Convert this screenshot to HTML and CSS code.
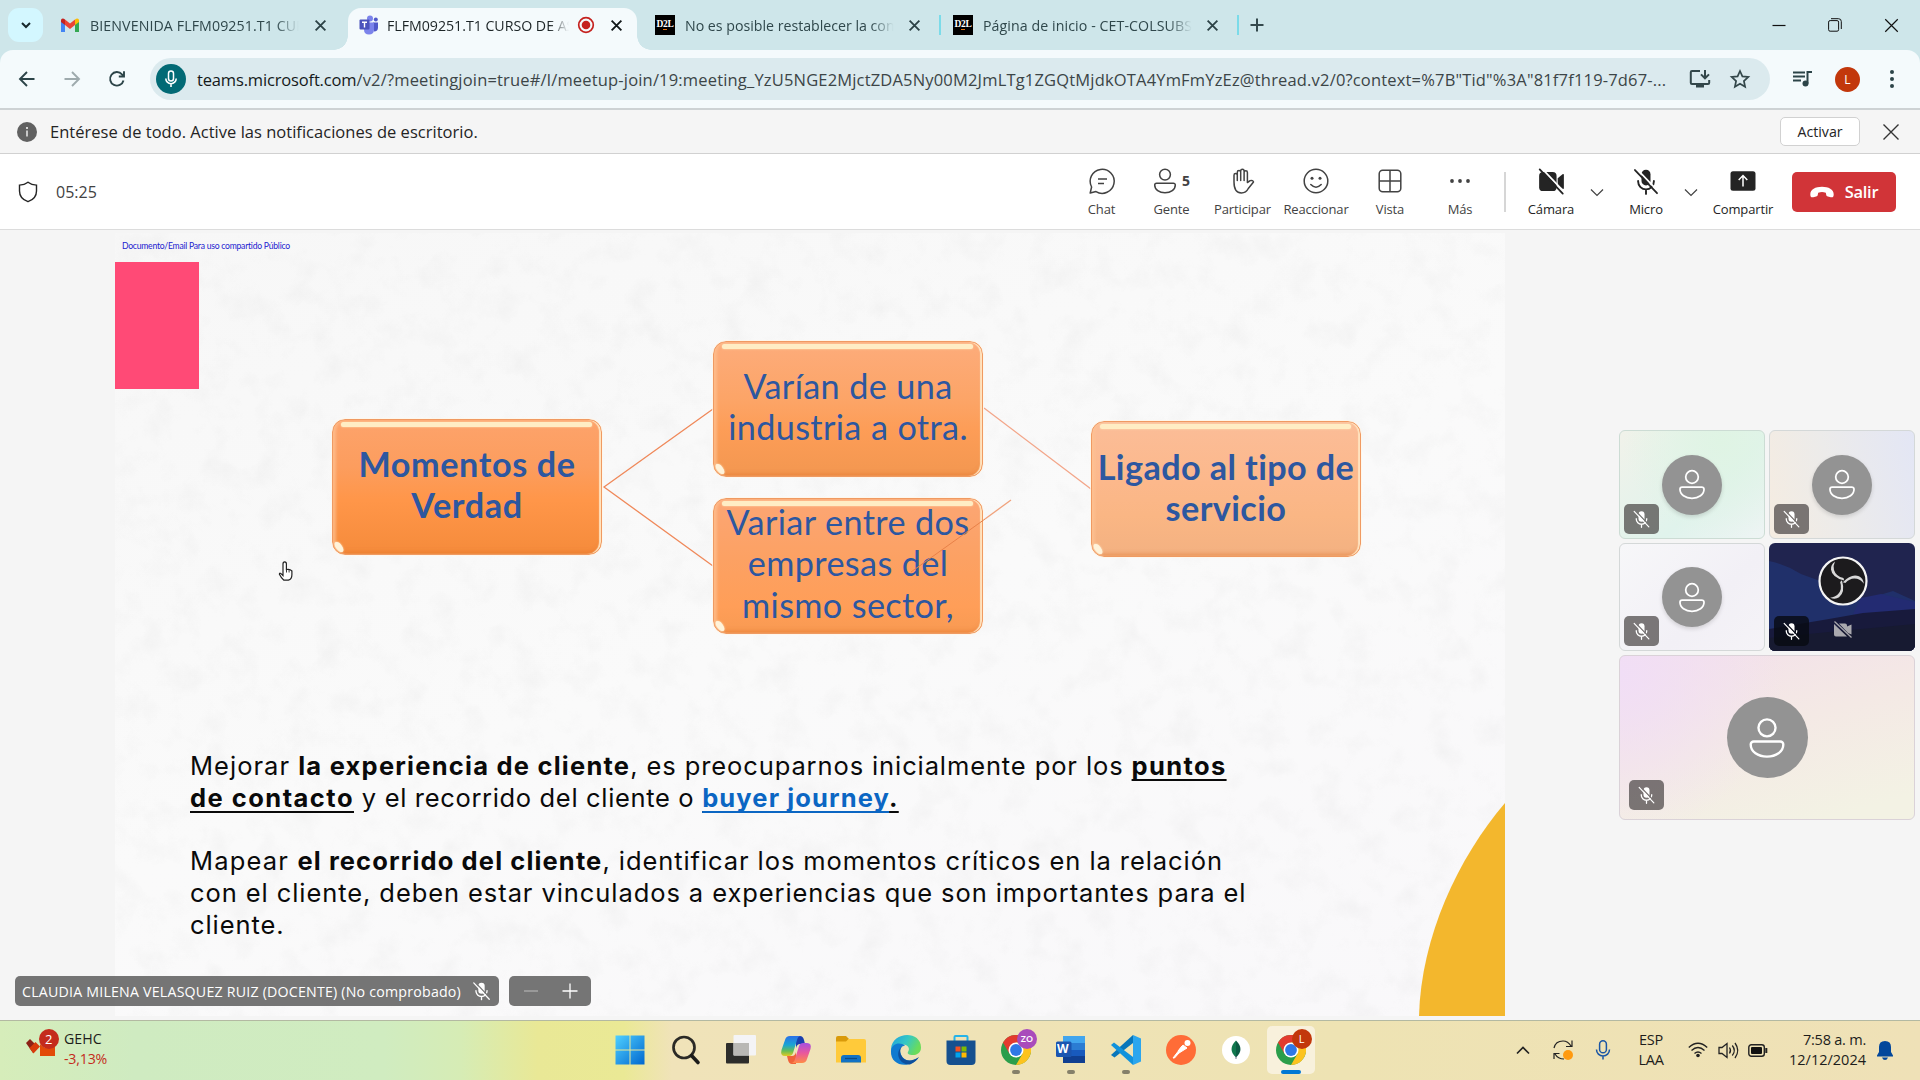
FILE: index.html
```html
<!DOCTYPE html>
<html lang="es">
<head>
<meta charset="utf-8">
<title>FLFM09251.T1 CURSO DE A</title>
<link rel="stylesheet" href="styles.css">
</head>
<body>
<svg class="defs" width="0" height="0">
  <defs>
    <mask id="slash-gap" maskUnits="userSpaceOnUse" x="0" y="0" width="24" height="24">
      <rect width="24" height="24" fill="#fff"/>
      <path d="M3.4 .4 23 21" stroke="#000" stroke-width="1.6"/>
    </mask>
    <symbol id="mic-off" viewBox="0 0 24 24">
      <g mask="url(#slash-gap)">
        <rect x="8" y="1.5" width="8" height="14" rx="4" fill="currentColor"/>
        <path d="M5 11.5v.5a7 7 0 0 0 14 0v-.5M12 19v4" fill="none" stroke="currentColor" stroke-width="1.7" stroke-linecap="round"/>
      </g>
      <path d="M2.2 1.8 21.8 22.4" stroke="currentColor" stroke-width="1.6" stroke-linecap="round"/>
    </symbol>
    <symbol id="cam-off" viewBox="0 0 24 24">
      <g mask="url(#slash-gap)" fill="currentColor">
        <rect x="1" y="3.5" width="15.5" height="17" rx="3.5"/>
        <path d="m17.5 9 4.3-3.4q1.2-.7 1.2.6v11.6q0 1.3-1.2.6L17.500 15z"/>
      </g>
      <path d="M1.500 1.200 22 22.800" stroke="currentColor" stroke-width="1.6" stroke-linecap="round"/>
    </symbol>
    <symbol id="person" viewBox="0 0 24 26">
      <g fill="none" stroke="currentColor" stroke-width="1.5">
        <circle cx="12" cy="6.600" r="5.400"/>
        <path d="M3.600 15.200h16.800a1.900 1.900 0 0 1 1.900 1.900c0 4.600-4.600 7.700-10.300 7.700S1.700 21.700 1.700 17.100a1.900 1.900 0 0 1 1.900-1.900z"/>
      </g>
    </symbol>
    <symbol id="close" viewBox="0 0 12 12"><path d="m1.500 1.500 9 9m0-9-9 9" stroke="currentColor" stroke-width="1.700"/></symbol>
    <symbol id="close-thin" viewBox="0 0 18 18"><path d="m1.500 1.500 15 15m0-15-15 15" stroke="currentColor" stroke-width="1.400"/></symbol>
    <symbol id="chrome" viewBox="0 0 30 30">
      <circle cx="15" cy="15" r="15" fill="#2b9e4b"/>
      <path d="M2 7.500A15 15 0 0 1 28 7.500H15l-6.500 11.200z" fill="#e33b2e"/>
      <path d="M28 7.500A15 15 0 0 1 15 30l6.500-11.300L15 7.500z" fill="#fcc31e"/>
      <circle cx="15" cy="15" r="7.500" fill="#fff"/><circle cx="15" cy="15" r="5.900" fill="#2f78e6"/>
    </symbol>
  </defs>
</svg>

<header class="tabs">
  <button class="tab-menu"><svg width="12" height="12" viewBox="0 0 12 12"><path d="m2 4 4 4 4-4" fill="none" stroke="#16282b" stroke-width="2"/></svg></button>
  <div class="tab t-mail">
    <svg class="fav" width="20" height="20" viewBox="0 0 20 20"><path d="M1 17V5l4 3v9z" fill="#4285f4"/><path d="M15 17V8l4-3v12z" fill="#34a853"/><path d="M5 4.500 10 8.500l5-4V10l-5 4-5-4z" fill="#ea4335"/><path d="M15 10V4.500c2-1.700 4-.9 4 1V7z" fill="#fbbc04"/><path d="M5 10V4.500c-2-1.700-4-.9-4 1V7z" fill="#c5221f"/></svg>
    <span class="tab-title">BIENVENIDA FLFM09251.T1 CUR</span>
    <svg class="x" width="13" height="13"><use href="#close"/></svg>
  </div>
  <div class="tab t-teams active">
    <svg class="fav" width="20" height="20" viewBox="0 0 20 20"><circle cx="11" cy="3.500" r="3" fill="#7b83eb"/><circle cx="16.800" cy="4.500" r="2" fill="#5059c9"/><path d="M14 7.500h5v5q0 4-4 4z" fill="#5059c9"/><path d="M5 7.500h10v7q0 5-5 5t-5-5z" fill="#7b83eb"/><rect x=".5" y="4.500" width="10" height="10" rx="1" fill="#4b53bc"/><path d="M3 7.200h5M5.500 7.200V12.500" stroke="#fff" stroke-width="1.400"/></svg>
    <span class="tab-title">FLFM09251.T1 CURSO DE AS</span>
    <svg class="rec" width="18" height="18" viewBox="0 0 18 18"><circle cx="9" cy="9" r="7.300" fill="none" stroke="#c5221f" stroke-width="1.700"/><circle cx="9" cy="9" r="4.300" fill="#c5221f"/></svg>
    <svg class="x" width="13" height="13"><use href="#close"/></svg>
  </div>
  <div class="tab t-d2l">
    <span class="d2l">D<i>2</i>L</span>
    <span class="tab-title d2">No es posible restablecer la con</span>
    <svg class="x" width="13" height="13"><use href="#close"/></svg>
    <b class="sep"></b>
  </div>
  <div class="tab t-d2l t-home">
    <span class="d2l">D<i>2</i>L</span>
    <span class="tab-title">Página de inicio - CET-COLSUBS</span>
    <svg class="x" width="13" height="13"><use href="#close"/></svg>
    <b class="sep"></b>
  </div>
  <svg class="plus" width="14" height="14" viewBox="0 0 14 14"><path d="M7 .5v13M.5 7h13" stroke="#34494d" stroke-width="2"/></svg>
  <div class="win">
    <svg width="14" height="16" viewBox="0 0 14 16"><path d="M.5 8.500h13" stroke="#111" stroke-width="1.200"/></svg>
    <svg width="14" height="14" viewBox="0 0 14 14"><rect x=".6" y="2.600" width="10" height="10.600" rx="1.500" fill="none" stroke="#111"/><path d="M3 .7h7.500q2.800 0 2.800 2.800V11" fill="none" stroke="#111"/></svg>
    <svg width="15" height="15"><use href="#close-thin"/></svg>
  </div>
</header>

<nav class="toolbar">
  <svg class="nav-ic" width="18" height="18" viewBox="0 0 18 18"><path d="M16.500 9H2.500M9 2 2 9l7 7" fill="none" stroke="#2c4448" stroke-width="1.900"/></svg>
  <svg class="nav-ic" width="18" height="18" viewBox="0 0 18 18"><path d="M1.500 9h14M9 2l7 7-7 7" fill="none" stroke="#9eaaad" stroke-width="1.900"/></svg>
  <svg class="nav-ic" width="18" height="18" viewBox="0 0 18 18"><path d="M15.500 10.500A6.800 6.800 0 1 1 14 4.300l1.800 1.800M16 1.300v5.200h-5.200" fill="none" stroke="#2c4448" stroke-width="1.900"/></svg>
  <div class="omnibox">
    <span class="mic"><svg width="18" height="20" viewBox="0 0 18 20"><rect x="6.500" y="2" width="5" height="10" rx="2.500" fill="none" stroke="#fff" stroke-width="1.500"/><path d="M3.800 9.500a5.200 5.200 0 0 0 10.400 0M9 14.800V18" fill="none" stroke="#fff" stroke-width="1.600"/></svg></span>
    <span class="url"><span class="host">teams.microsoft.com</span><span class="path">/v2/?meetingjoin=true#/l/meetup-join/19:meeting_YzU5NGE2MjctZDA5Ny00M2JmLTg1ZGQtMjdkOTA4YmFmYzEz@thread.v2/0?context=%7B"Tid"%3A"81f7f119-7d67-...</span></span>
    <svg class="install" width="22" height="20" viewBox="0 0 22 20"><path d="M11 2H3q-1.200 0-1.200 1.200v10.600Q1.800 15 3 15h16q1.200 0 1.200-1.200V11M16 1v8m-4-3.600L16 9.300l4-3.900" fill="none" stroke="#33474a" stroke-width="2"/><path d="M7 15h8v3.500H7z" fill="#33474a"/></svg>
    <svg class="star" width="20" height="20" viewBox="0 0 20 20"><path d="m10 2 2.400 5.400 5.900.6-4.400 4 1.200 5.800L10 14.800l-5.100 3 1.200-5.800-4.400-4 5.900-.6z" fill="none" stroke="#33474a" stroke-width="1.700"/></svg>
  </div>
  <svg class="queue" width="20" height="18" viewBox="0 0 20 18"><path d="M0 2.500h12M0 6.500h12M0 10.500h8" stroke="#2c4448" stroke-width="2"/><circle cx="12.500" cy="13.500" r="3" fill="#2c4448"/><path d="M14.500 13.500V2H19" fill="none" stroke="#2c4448" stroke-width="2"/></svg>
  <span class="me">L</span>
  <svg class="dots" width="6" height="20" viewBox="0 0 6 20"><g fill="#2c4448"><circle cx="3" cy="3" r="2"/><circle cx="3" cy="10" r="2"/><circle cx="3" cy="17" r="2"/></g></svg>
</nav>

<section class="notice">
  <svg width="20" height="20" viewBox="0 0 20 20"><circle cx="10" cy="10" r="10" fill="#616161"/><path d="M10 8.500v6" stroke="#fff" stroke-width="1.300"/><circle cx="10" cy="5.900" r="1" fill="#fff"/></svg>
  <span class="notice-text">Entérese de todo. Active las notificaciones de escritorio.</span>
  <button class="activate">Activar</button>
  <svg class="nx" width="18" height="18"><use href="#close-thin"/></svg>
</section>

<section class="meetbar">
  <svg width="20" height="22" viewBox="0 0 20 22"><path d="M10 1.200C7.500 3.200 4.800 4 1.500 4.100V10c0 5.300 3.300 8.900 8.500 10.700 5.200-1.800 8.500-5.400 8.500-10.700V4.100C15.200 4 12.500 3.200 10 1.200z" fill="none" stroke="#242424" stroke-width="1.400"/></svg>
  <span class="clock">05:25</span>
  <div class="actions">
    <div class="act a1"><svg width="26" height="26" viewBox="0 0 26 26" fill="none" stroke="#424242" stroke-width="1.500"><path d="M1.200 25 2.600 19A12 12 0 1 1 7 23.600z" stroke-linejoin="round"/><path d="M9 11h9M9 15.500h6"/></svg><span>Chat</span></div>
    <div class="act a2"><div class="ppl"><svg width="24" height="26"><use href="#person"/></svg><b>5</b></div><span>Gente</span></div>
    <div class="act a3"><svg width="24" height="26" viewBox="0 0 24 26" fill="none" stroke="#424242" stroke-width="1.500" stroke-linejoin="round" stroke-linecap="round"><path d="M3 14V7.200a1.600 1.600 0 0 1 3.300 0V4.300a1.700 1.700 0 0 1 3.400 0V2.900a1.700 1.700 0 0 1 3.400 0V4.500a1.600 1.600 0 0 1 3.300 0V14.500l2.800-1.800c1.600-.8 3 .1 3.300 1.300l-5.200 6.500c-1.500 3-3.300 4.500-6.900 4.500C5.500 25 3 20.500 3 14zM6.300 7v5.500M9.700 4.500v8M13.100 4.500v8"/></svg><span>Participar</span></div>
    <div class="act a4"><svg width="26" height="26" viewBox="0 0 26 26"><circle cx="13" cy="13" r="11.800" fill="none" stroke="#424242" stroke-width="1.500"/><circle cx="9" cy="10.300" r="1.500" fill="#424242"/><circle cx="17" cy="10.300" r="1.500" fill="#424242"/><path d="M7.800 16.500q5.200 5.400 10.400 0" fill="none" stroke="#424242" stroke-width="1.500" stroke-linecap="round"/></svg><span>Reaccionar</span></div>
    <div class="act a5"><svg width="26" height="26" viewBox="0 0 26 26" fill="none" stroke="#424242" stroke-width="1.500"><rect x="2.200" y="2.200" width="21.600" height="21.600" rx="3.500"/><path d="M13 2.200v21.600M2.200 13h21.600"/></svg><span>Vista</span></div>
    <div class="act a6"><svg width="26" height="26" viewBox="0 0 26 26" fill="#424242"><circle cx="5" cy="13" r="1.900"/><circle cx="13" cy="13" r="1.900"/><circle cx="21" cy="13" r="1.900"/></svg><span>Más</span></div>
    <i class="rule"></i>
    <div class="act dark a7"><svg width="27" height="27"><use href="#cam-off"/></svg><span>Cámara</span></div>
    <svg class="chev c1" width="14" height="9" viewBox="0 0 14 9"><path d="m1 1.500 6 6 6-6" fill="none" stroke="#424242" stroke-width="1.200"/></svg>
    <div class="act dark a8"><svg width="28" height="27"><use href="#mic-off"/></svg><span>Micro</span></div>
    <svg class="chev c2" width="14" height="9" viewBox="0 0 14 9"><path d="m1 1.500 6 6 6-6" fill="none" stroke="#424242" stroke-width="1.200"/></svg>
    <div class="act dark a9"><svg width="26" height="26" viewBox="0 0 26 26"><rect x=".5" y="3.300" width="25" height="19.400" rx="2.500" fill="#242424"/><path d="M13 18.500V8M8.700 12 13 7.600l4.300 4.400" fill="none" stroke="#fff" stroke-width="1.500"/></svg><span>Compartir</span></div>
    <button class="leave"><svg width="24" height="12" viewBox="0 0 24 12"><path d="M12 .8C5.500.8.300 3.500.3 8.200c0 2.800 1 3.400 3 3l2.800-.6c1-.2 1.500-.8 1.700-1.800l.4-2.100q3.800-1.200 7.600 0l.4 2.100c.2 1 .7 1.600 1.700 1.800l2.800.6c2 .4 3-.2 3-3C23.700 3.500 18.500.8 12 .8z" fill="#fff"/></svg>Salir</button>
  </div>
</section>

<main class="stage">
  <article class="slide">
    <svg class="paper" width="1390" height="783"><filter id="grain" x="0" y="0" width="100%" height="100%"><feTurbulence type="fractalNoise" baseFrequency=".035" numOctaves="5" seed="8"/><feColorMatrix values="0 0 0 0 .62  0 0 0 0 .62  0 0 0 0 .62  .8 .8 0 0 -.75"/></filter><rect width="1390" height="783" filter="url(#grain)" opacity=".26"/></svg>
    <svg class="links" width="1390" height="783" viewBox="115 233 1390 783">
      <path d="M1505 803C1458 858 1421 937 1419 1016H1505z" fill="#f3b72d"/>
      <g stroke="#f0895a" stroke-width="1.300" fill="none"><path d="M713 409 604 487l109 79"/><path d="m984 408 107 81" stroke="#f3a588"/></g>
    </svg>
    <div class="stamp">Documento/Email Para uso compartido Público</div>
    <div class="swatch"></div>
    <div class="copy">
      <p><span class="m1">Mejorar </span><b class="m2">la experiencia de cliente</b><span class="m3">, es preocuparnos inicialmente por los </span><u class="m4">puntos</u><br><u class="m5">de contacto</u><span class="m6"> y el recorrido del cliente o </span><u class="m7"><em>buyer journey</em>.</u></p>
      <p><span class="m8">Mapear </span><b class="m9">el recorrido del cliente</b><span class="m10">, identificar los momentos críticos en la relación</span><br><span class="m10">con el cliente, deben estar vinculados a experiencias que son importantes para el</span><br><span class="m10">cliente.</span></p>
    </div>
    <div class="node n1">Momentos de<br>Verdad</div>
    <div class="node n2">Varían de una<br>industria a otra.</div>
    <div class="node n3">Variar entre dos<br>empresas del<br>mismo sector,</div>
    <div class="node n4">Ligado al tipo de<br>servicio</div>
    <svg class="links" width="1390" height="783" viewBox="115 233 1390 783" fill="none">
      <path d="m985 519 26-19" stroke="#f0a27c" stroke-width="1.300"/><path d="m911 572 74-53" stroke="#e88148" stroke-width="1"/>
      <path d="M283 575.500v-11.500q0-2.200 1.700-2.200t1.700 2.200v5.500q3.500-.8 5.500 1.500v3.700q0 4.500-3.500 5.500h-4.500q-2.500-2-4.500-6 0-2.500 3.600 1.300z" fill="#fff" stroke="#222" stroke-width="1.200"/><path d="M286.500 569.500v3m2.600-2.500v2.500" stroke="#222" stroke-width=".9"/>
    </svg>
    <div class="nameplate">
      <div class="plate who"><span>CLAUDIA MILENA VELASQUEZ RUIZ (DOCENTE) (No comprobado)</span><svg width="19" height="20"><use href="#mic-off"/></svg></div>
      <div class="plate zoom"><svg width="16" height="16" viewBox="0 0 16 16"><path d="M1 8h14" stroke="#aaa" stroke-width="1.400"/></svg><svg width="16" height="16" viewBox="0 0 16 16"><path d="M.5 8h15M8 .5v15" stroke="#fff" stroke-width="1.300"/></svg></div>
    </div>
  </article>

  <aside class="tiles">
    <div class="tile green"><span class="avatar"><svg width="28" height="31"><use href="#person"/></svg></span><span class="muted"><svg width="19" height="18"><use href="#mic-off"/></svg></span></div>
    <div class="tile blue"><span class="avatar"><svg width="28" height="31"><use href="#person"/></svg></span><span class="muted"><svg width="19" height="18"><use href="#mic-off"/></svg></span></div>
    <div class="tile lilac"><span class="avatar"><svg width="28" height="31"><use href="#person"/></svg></span><span class="muted"><svg width="19" height="18"><use href="#mic-off"/></svg></span></div>
    <div class="tile obs">
      <svg width="146" height="108" viewBox="0 0 146 108"><rect width="146" height="108" fill="#20244f"/><path d="M0 18q16 3 32 13l22 8 28 20 22-5 20-6 22 10v50H0z" fill="#20306a"/><path d="M92 55l20-4 34 8v12H84z" fill="#232b72"/><path d="M0 86l60-10 34-6 52-4v42H0z" fill="#181a3c"/><path d="M0 95l60-6 86-8v27H0z" fill="#171a31"/>
        <circle cx="74" cy="38" r="23.500" fill="#1c1b1d" stroke="#f4f4f4" stroke-width="2.200"/>
        <g fill="#d8d8d8"><path id="blade" d="M75.200 37.500Q63 34.500 62 26.500 61.500 22 66 18.500 63.800 23 65 27 67 33.500 74.500 35z"/><use href="#blade" transform="rotate(120 74 38)"/><use href="#blade" transform="rotate(240 74 38)"/></g>
        <g transform="translate(65 78)" fill="#aaa9ae"><path d="M0 3l13 12.500H2Q0 15.500 0 13.500zM5 2.500h6q2 0 2 2v1l4.500-2v10L14 12z"/><path d="m.5.500 17 16" stroke="#aaa9ae" stroke-width="1.200"/></g>
      </svg>
      <span class="muted"><svg width="19" height="18"><use href="#mic-off"/></svg></span></div>
    <div class="tile wide"><span class="avatar big"><svg width="38" height="42"><use href="#person"/></svg></span><span class="muted"><svg width="19" height="18"><use href="#mic-off"/></svg></span></div>
  </aside>
</main>

<footer class="taskbar">
  <div class="widget">
    <svg width="36" height="32" viewBox="0 0 36 32"><path d="m3 15 4-4 8 8-5 6z" fill="#8c2116"/><path d="m6.500 20 6-6 4.500 4.500-6.500 7z" fill="#d83b0a"/><path d="M17 28V16l5 4 10-4v12z" fill="#e24a08"/><circle cx="26" cy="11" r="10" fill="#c42b1c"/></svg>
    <b class="cnt">2</b>
    <div><span>GEHC</span><span class="loss">-3,13%</span></div>
  </div>
  <div class="apps">
    <div class="app"><svg width="30" height="30" viewBox="0 0 30 30"><linearGradient id="w" x2="1" y2="1"><stop stop-color="#4fd0ff"/><stop offset="1" stop-color="#0067cf"/></linearGradient><path d="M.5.500h14v14H.5zM15.500.500h14v14h-14zM.5 15.500h14v14H.5zM15.500 15.500h14v14h-14z" fill="url(#w)"/></svg></div>
    <div class="app search"><svg width="30" height="30" viewBox="0 0 30 30"><circle cx="13" cy="12.500" r="10.500" fill="none" stroke="#2b2a26" stroke-width="2.700"/><path d="m20.500 20.500 6.500 7" stroke="#1c1c1a" stroke-width="3.600" stroke-linecap="round"/></svg></div>
    <div class="app"><svg width="30" height="30" viewBox="0 0 30 30"><rect y="8" width="23" height="20.500" rx="1" fill="#2d2d2b"/><rect x="7.500" y="0" width="22.500" height="20.500" rx="1" fill="#f4f4f6"/><path d="M7.500 8H23v12.500H7.500z" fill="#b9b8b5"/></svg></div>
    <div class="app"><svg width="30" height="30" viewBox="0 0 30 30"><defs><linearGradient id="c1" x2="0" y2="1"><stop stop-color="#2c70e8"/><stop offset=".45" stop-color="#18a5d4"/><stop offset=".75" stop-color="#67bd55"/><stop offset="1" stop-color="#e3c923"/></linearGradient><linearGradient id="c2" x2="0" y2="1"><stop stop-color="#a64fe0"/><stop offset=".5" stop-color="#e9579d"/><stop offset="1" stop-color="#ff8b47"/></linearGradient></defs><path d="M15 1h4q3 0 4 4l1 4h-5q-3 0-4 4z" fill="#1a3fae"/><path d="M15 29h-4q-3 0-4-4l-1-4h5q3 0 4-4z" fill="#f0633a"/><path d="M9 1h11q-3 0-4 4l-4 13q-1 3-4 3H4q-5 0-3.500-6L4 5q1-4 5-4z" fill="url(#c1)"/><path d="M21 28H10q3 0 4-4l4-13q1-3 4-3h4q5 0 3.500 6L26 24q-1 4-5 4z" fill="url(#c2)"/></svg></div>
    <div class="app"><svg width="30" height="30" viewBox="0 0 30 30"><path d="M0 3q0-2 2-2h8l3 3-3 4H0z" fill="#d99a0a"/><path d="M0 6.500h10L12.500 4H28q2 0 2 2v21.500H0z" fill="#ffca3a"/><path d="M5 27.500V23q0-3 3-3h14q3 0 3 3v4.500z" fill="#1172c4"/><path d="M9 23.500h12" stroke="#0a4a86" stroke-width="1.300"/></svg></div>
    <div class="app"><svg width="30" height="30" viewBox="0 0 30 30"><defs><linearGradient id="e1" x2="1" y2=".4"><stop stop-color="#1e9fe0"/><stop offset=".55" stop-color="#35c8c4"/><stop offset="1" stop-color="#6bdc5a"/></linearGradient></defs><path d="M0 14C1-4 30-5 30 12.500c0 6-5 8-9.500 7.500-4-.5-4.500-2-3-4 2-4-3-8-8-6Q2 13 .5 18z" fill="url(#e1)"/><path d="M0 16C1 8 9 7 14 10.500q-7 1-4 9c3 7 11 8 17.500 3C20 34-1 32 0 16z" fill="#0f7ad0"/><path d="M11.500 11q-4 4-1.500 9c3 7 11 7 18 2q-3 5-9 7.500C8 30 3 17 11.500 11z" fill="#0d4f9d"/></svg></div>
    <div class="app"><svg width="30" height="30" viewBox="0 0 30 30"><path d="M8.500 6V2q0-1 1-1h11q1 0 1 1v4" fill="none" stroke="#25b4e9" stroke-width="2"/><path d="M.5 5.500h29V26q0 4-4 4h-21q-4 0-4-4z" fill="#15508f"/><path d="M9.500 11.500h5v5h-5z" fill="#f25022"/><path d="M15.500 11.500h5v5h-5z" fill="#7fba00"/><path d="M9.500 17.500h5v5h-5z" fill="#00a4ef"/><path d="M15.500 17.500h5v5h-5z" fill="#ffb900"/></svg></div>
    <div class="app run"><svg width="30" height="30"><use href="#chrome"/></svg><b class="badge zo">ZO</b></div>
    <div class="app run"><svg width="30" height="30" viewBox="0 0 30 30"><path d="M7 1h22v8H7z" fill="#41a5ee"/><path d="M7 8h22v7H7z" fill="#2b7cd3"/><path d="M7 15h22v7H7z" fill="#185abd"/><path d="M7 21h22v7H7z" fill="#103f91"/><rect y="6.500" width="15.500" height="15.500" rx="1.500" fill="#1b55b0"/></svg><b class="wletter">W</b></div>
    <div class="app run"><svg width="30" height="30" viewBox="0 0 30 30"><path d="M0 20 22 0v8L3.500 22.500z" fill="#0876ba"/><path d="M0 10l3-2.500L22 22v8z" fill="#1192dc"/><path d="M22 0l8 3.500v23L22 30z" fill="#2ba6ee"/></svg></div>
    <div class="app"><svg width="30" height="30" viewBox="0 0 30 30"><circle cx="15" cy="15" r="15" fill="#ff6c37"/><circle cx="21.500" cy="8" r="3" fill="#fff"/><path d="M7 23l10-13 4 3-8 5-4.500 5zM12 16l4-5" fill="#fff" stroke="#fff"/></svg></div>
    <div class="app"><svg width="30" height="30" viewBox="0 0 30 30"><circle cx="15" cy="15" r="14" fill="#fff"/><path d="M15 5.500q-9 9 0 17z" fill="#10774d"/><path d="M15 5.500q9 9 0 17z" fill="#0b5a43"/><path d="M15 21v3" stroke="#557" stroke-width=".8"/></svg></div>
    <div class="app current"><svg width="30" height="30"><use href="#chrome"/></svg><b class="badge el">L</b></div>
  </div>
  <div class="tray">
    <svg class="t1" width="14" height="9" viewBox="0 0 14 9"><path d="m1 7.500 6-6 6 6" fill="none" stroke="#222" stroke-width="1.700"/></svg>
    <svg class="t2" width="22" height="22" viewBox="0 0 22 22"><path d="M2 9Q3.500 2 11 2q5 0 8 5M20 1.500V7.500h-6M2 20v-5.500h5.500M3 15q3 5 9 5" fill="none" stroke="#222" stroke-width="1.200"/><circle cx="16" cy="16" r="5" fill="#ff9a10"/></svg>
    <svg class="t3" width="16" height="20" viewBox="0 0 16 20"><rect x="4.600" y=".8" width="6.800" height="12" rx="3.400" fill="none" stroke="#1a56a5" stroke-width="1.500"/><path d="M1.500 9.500a6.500 6.500 0 0 0 13 0M8 16v3.500" fill="none" stroke="#1a56a5" stroke-width="1.500"/></svg>
    <div class="lang">ESP<br>LAA</div>
    <svg class="t4" width="20" height="16" viewBox="0 0 20 16"><path d="M.8 5.500Q10-3 19.200 5.500M3.500 8.500q6.500-6 13 0M6.500 11.500q3.500-3 7 0" fill="none" stroke="#222" stroke-width="1.400"/><circle cx="10" cy="13.500" r="1.800" fill="#222"/></svg>
    <svg class="t5" width="21" height="17" viewBox="0 0 21 17"><path d="M1 5.500h3l5-4v14l-5-4H1zM11.500 5.500q2 3 0 6M14.300 3.500q4 5 0 10M17 1q5.500 7.500 0 15" fill="none" stroke="#222" stroke-width="1.300"/></svg>
    <svg class="t6" width="20" height="13" viewBox="0 0 20 13"><rect x=".8" y=".8" width="15.500" height="11.400" rx="2.500" fill="none" stroke="#222" stroke-width="1.400"/><rect x="3" y="3" width="11" height="7" rx="1" fill="#111"/><path d="M18.300 4v5" stroke="#222" stroke-width="2"/></svg>
    <div class="date"><span>7:58 a. m.</span><br>12/12/2024</div>
    <svg class="t7" width="16" height="19" viewBox="0 0 16 19"><path d="M8 0q6 0 6 6v5l2 3.500v1H0v-1L2 11V6q0-6 6-6zM5 16.500h6q-1 2.500-3 2.500t-3-2.500z" fill="#03479b"/></svg>
  </div>
</footer>
</body>
</html>
```
FILE: styles.css
```css
* { box-sizing: border-box; }
body { margin: 0; width: 1920px; height: 1080px; overflow: hidden; display: flex; flex-direction: column; font-family: "Open Sans", "Noto Sans", sans-serif; font-size: 14.2px; color: #242424; background: #f5f5f5; }
svg { display: block; flex: none; overflow: visible; }
.defs { position: absolute; }
button { font: inherit; border: 0; padding: 0; }
i { font-style: normal; }

/* Tab strip */
.tabs { position: relative; z-index: 1; height: 50px; flex: none; display: flex; align-items: center; background: #cee6ea; color: #2f474b; white-space: nowrap; }
.tab-menu { width: 35px; height: 34px; margin-left: 8px; border-radius: 11px; background: #d3f7ff; display: flex; align-items: center; justify-content: center; }
.tab { display: flex; align-items: center; height: 100%; flex: none; }
.tab-title { overflow: hidden; width: 211px; flex: none; -webkit-mask: linear-gradient(90deg, #000 88%, transparent 99%); mask: linear-gradient(90deg, #000 88%, transparent 99%); letter-spacing: .08px; }
.tab-title.d2 { letter-spacing: -.01px; }
.t-mail { width: 305px; padding-left: 17px; }
.t-mail .tab-title { margin: 0 13px 0 10px; letter-spacing: .1px; }
.t-teams { width: 289px; padding-left: 11px; height: 42px; align-self: flex-end; padding-bottom: 8px; position: relative; }
.active { background: #f4fafc; border-radius: 13px 13px 0 0; color: #1c2426; }
.active::before, .active::after { content: ""; position: absolute; bottom: 0; width: 14px; height: 14px; }
.active::before { left: -14px; background: radial-gradient(circle at 0 0, transparent 13.5px, #f4fafc 14px); }
.active::after { right: -14px; background: radial-gradient(circle at 100% 0, transparent 13.5px, #f4fafc 14px); }
.t-teams .tab-title { width: 184px; margin: 0 6px 0 8px; letter-spacing: -.02px; }
.rec { margin-right: 15px; }
.x { color: #2c4246; }
.active .x { color: #101618; }
.d2l { width: 20px; height: 20px; background: #000; color: #fff; font: bold 9.500px/19px "Liberation Serif", serif; text-align: center; letter-spacing: -.4px; }
.d2l i { border-bottom: 1.500px solid #e87511; }
.t-d2l { width: 304px; padding-left: 18px; }
.t-home { width: 298px; padding-left: 12px; }
.t-d2l .tab-title { margin: 0 12px 0 10px; }
.sep { width: 2px; height: 20px; background: #7bdbe9; margin-left: 18px; }
.plus { margin-left: 11px; }
.win { margin-left: auto; display: flex; align-items: center; gap: 42px; padding-right: 21px; color: #111; }

/* Address bar */
.toolbar { height: 60px; flex: none; display: flex; align-items: center; background: #f4fafc; border-bottom: 2px solid #cdd2d4; border-radius: 13px 13px 0 0; position: relative; }
.toolbar::before { content: ""; position: absolute; z-index: -1; inset: 0 0 30px; background: #cee6ea; }
.nav-ic { margin-left: 18px; margin-right: 9px; }
.omnibox { width: 1620px; height: 42px; margin-left: 15px; border-radius: 21px; background: #dbeaee; display: flex; align-items: center; padding: 0 20px 0 6px; }
.mic { width: 30px; height: 30px; border-radius: 50%; background: #026a75; display: flex; align-items: center; justify-content: center; margin-right: 11px; }
.url { font-size: 16.500px; white-space: nowrap; width: 1468px; flex: none; color: #3c4547; }
.host { color: #15191a; letter-spacing: -.16px; }
.path { letter-spacing: .175px; }
.install { margin-left: 24px; }
.star { margin-left: 19px; }
.queue { margin-left: 23px; }
.me { width: 25px; height: 25px; border-radius: 50%; background: #c2370b; color: #fff; font-size: 12px; line-height: 25px; text-align: center; margin-left: 22px; }
.dots { margin-left: 29px; }

/* Notification strip */
.notice { height: 44px; flex: none; display: flex; align-items: center; background: #f5f5f5; border-bottom: 1px solid #d1d1d1; padding: 0 20px 0 17px; }
.notice-text { font-size: 16.500px; letter-spacing: .02px; margin-left: 13px; }
.activate { margin-left: auto; width: 80px; height: 29px; background: #fff; border: 1px solid #d1d1d1; border-radius: 5px; color: #242424; }
.nx { margin-left: 22px; color: #333; }

/* Meeting controls */
.meetbar { height: 76px; flex: none; display: flex; align-items: center; background: #fff; border-bottom: 1px solid #dcdcdc; padding: 0 24px 0 18px; }
.clock { font-size: 16px; margin-left: 18px; color: #424242; }
.actions { margin-left: auto; display: flex; height: 75px; align-items: center; }
.act { display: flex; flex-direction: column; align-items: center; height: 50px; margin-top: 2px; justify-content: space-between; font-size: 13px; letter-spacing: -.14px; color: #424242; flex: none; }
.act span { line-height: 18px; white-space: nowrap; }
.dark { color: #242424; }
.ppl { display: flex; align-items: center; gap: 5px; }
.ppl b { font-size: 14px; line-height: 20px; }
.a1, .a2 { width: 70px; }
.a3 { width: 72px; }
.a4 { width: 75px; }
.a5 { width: 73px; }
.a6 { width: 67px; }
.rule { width: 2px; height: 40px; background: #d6d6d6; margin: 0 10px 0 10.500px; }
.a7 { width: 70px; }
.chev { margin-top: 2px; }
.c1 { margin-left: 4px; }
.a8 { width: 64px; margin-left: 10px; }
.c2 { margin-left: 6px; }
.a9 { width: 62px; margin-left: 14px; }
.leave { width: 104px; height: 40px; border-radius: 5px; background: #d13438; color: #fff; font-weight: 600; font-size: 16.500px; letter-spacing: -.3px; display: flex; align-items: center; justify-content: center; gap: 11px; margin-left: 18px; }

/* Stage */
.stage { height: 790px; flex: none; display: flex; align-items: flex-start; padding: 3px 0 0 115px; background: #f5f5f5; }
.slide { position: relative; width: 1390px; height: 783px; flex: none; background: linear-gradient(160deg, #f7f7f7, #fafafa 50%, #f9f8fa); padding-top: 5px; }
.paper, .links { position: absolute; left: 0; top: 0; }
.stamp { position: relative; margin-left: 7px; height: 16px; font: 8.600px/16px Lato, Carlito, sans-serif; letter-spacing: -.24px; color: #2222d0; white-space: nowrap; }
.swatch { position: relative; margin-top: 8px; width: 84px; height: 127px; background: #ff4a76; }
.copy { position: relative; padding-left: 75px; margin-top: 361px; font: 25.500px/31.700px Inter, sans-serif; color: #0a0a0a; white-space: nowrap; }
.copy p { margin: 0 0 31.700px; }
.copy b, .copy u { font-weight: 700; }
.copy u { text-underline-offset: 4px; text-decoration-thickness: 2px; text-decoration-skip-ink: none; }
.copy em { font-style: normal; color: #0b66c3; text-decoration: underline #0b66c3 2px; text-underline-offset: 4px; }
.m1 { letter-spacing: 1.020px; }
.m2 { letter-spacing: 1.230px; }
.m3 { letter-spacing: .890px; }
.m4 { letter-spacing: 1.360px; }
.m5 { letter-spacing: 1.470px; }
.m6 { letter-spacing: .660px; }
.m7 { letter-spacing: 1.120px; }
.m8 { letter-spacing: 1.170px; }
.m9 { letter-spacing: 1.130px; }
.m10 { letter-spacing: .920px; }

.node { position: absolute; display: flex; align-items: center; justify-content: center; text-align: center; padding-bottom: 6px; width: 270px; height: 136px; border: 1px solid #f09a62; border-radius: 13px; font: 34.200px/41.300px Lato, Carlito, sans-serif; letter-spacing: .38px; color: #2d57a0; white-space: nowrap; outline: 1.500px solid rgba(255, 246, 232, .8); }
.node::before { content: ""; position: absolute; left: 8px; right: 9px; top: 2px; height: 5px; border-radius: 3px; background: #ffedc4; box-shadow: 0 0 2px #ffe6bd; }
.node::after { content: ""; position: absolute; left: 3px; bottom: 1px; width: 6px; height: 12px; border-radius: 50%; background: #fff3da; transform: rotate(-38deg); box-shadow: 0 0 2px #fff3da; }
.n1, .n2, .n3, .n4 { box-shadow: inset -2px 0 1px #ffe3bf, inset 5px 0 3px -2px rgba(255, 196, 150, .7), inset 0 -4px 4px -2px rgba(226, 112, 40, .5); }
.n1 { left: 217px; top: 186px; background: linear-gradient(#fda36b, #fc9d5e 35%, #ff9649 60%, #f58b3b); font-weight: 700; letter-spacing: .6px; }
.n2 { left: 598px; top: 108px; background: linear-gradient(#fdac7b, #fca466 45%, #fd9d57 65%, #f39750); }
.n3 { left: 598px; top: 265px; background: linear-gradient(#fca674, #fca163 45%, #ff9e58 80%, #f89a52); }
.n4 { left: 976px; top: 188px; background: linear-gradient(#fbbd98, #fcb88b 45%, #fab684 70%, #f3b181); font-weight: 700; letter-spacing: .4px; padding-bottom: 4px; }

.nameplate { position: absolute; left: -100px; top: 743px; display: flex; gap: 10px; }
.plate { height: 30px; border-radius: 5px; background: rgba(88, 88, 88, .82); color: #fff; display: flex; align-items: center; }
.who { width: 484px; padding: 0 8px 0 7px; justify-content: space-between; white-space: nowrap; letter-spacing: .210px; }
.zoom { width: 82px; justify-content: center; gap: 23px; }

/* Participants */
.tiles { margin: 197px 0 0 114px; width: 296px; display: grid; grid-template: 109px 108px 165px / 146px 146px; gap: 4px; }
.tile { position: relative; border-radius: 6px; border: 1px solid #d4d8d8; display: flex; align-items: center; justify-content: center; overflow: hidden; }
.green { background: radial-gradient(circle at 70% 10%, #dff4e4, transparent 70%), linear-gradient(135deg, #f1f2ea, #e0f3ec 60%, #eef4f4); border-color: #ccdcd4; }
.blue { background: linear-gradient(75deg, #f5ece1, #ecebea 45%, #e3e6f5); }
.lilac { background: linear-gradient(135deg, #f7f7f9, #f2f0f6 60%, #f5f3f7); }
.obs { border: 0; }
.wide { grid-column: span 2; background: radial-gradient(circle at 0 10%, #f1def6, transparent 50%), linear-gradient(165deg, #f3e0ea, #f4e9e5 45%, #f3f2e4 90%); border-color: #dad2d8; }
.avatar { width: 60px; height: 60px; border-radius: 50%; background: #939393; color: #fff; display: flex; align-items: center; justify-content: center; box-shadow: 0 2px 4px rgba(0, 0, 0, .14); }
.big { width: 81px; height: 81px; box-shadow: none; }
.muted { position: absolute; left: 4px; bottom: 4px; width: 35px; height: 30px; border-radius: 5px; background: rgba(70, 66, 66, .7); color: #fff; display: flex; align-items: center; justify-content: center; }
.obs .muted { left: 5px; bottom: 5px; background: rgba(8, 10, 18, .8); }
.wide .muted { left: 9px; bottom: 9px; }

/* Taskbar */
.taskbar { height: 60px; flex: none; position: relative; display: flex; border-top: 1px solid #b3b9a2; background: linear-gradient(90deg, #d6edba, #cfebc1 7%, #d0ecc0 20%, #d6ecb5 24%, #e9e896 28%, #eae995 32.500%, #f0e3b9 35%, #eee3b3 70%, #efe1b7); color: #1d1d1b; }
.widget { position: relative; display: flex; width: 615px; padding: 7px 0 0 23px; flex: none; }
.widget div { display: flex; flex-direction: column; line-height: 20px; margin: 1px 0 0 5px; }
.loss { color: #c42b1c; letter-spacing: -.2px; }
.cnt { position: absolute; left: 45px; top: 8px; font: 13px/20px "Open Sans", sans-serif; color: #fff; }
.apps { display: flex; padding-top: 5px; margin-left: -13px; }
.app { position: relative; width: 55px; height: 48px; display: flex; align-items: center; justify-content: center; }
.search { margin-left: 1px; }
.run::after, .current::after { content: ""; position: absolute; left: 24px; bottom: 0; width: 8px; height: 4px; border-radius: 2px; background: #85806a; }
.current { width: 48px; margin-left: 3.500px; border-radius: 5px; background: #f8f1dc; }
.current::after { left: 14px; width: 20px; background: #0078d4; }
.badge { position: absolute; left: 29px; top: 3px; width: 20px; height: 20px; border-radius: 50%; background: #a94bbb; color: #fff; font: 600 9px/20px "Open Sans", sans-serif; text-align: center; }
.el { left: 25px; background: #c2370b; font-size: 11px; font-weight: 400; }
.wletter { position: absolute; left: 14px; top: 13px; font: 700 12px/20px "Open Sans", sans-serif; color: #fff; }
.tray { margin-left: auto; display: flex; align-items: center; font-size: 14.500px; line-height: 20px; padding: 0 27px 1px 0; }
.t2 { margin-left: 22px; }
.t3 { margin-left: 21px; }
.lang { width: 34px; text-align: center; margin-left: 23px; letter-spacing: -.240px; }
.t4 { margin-left: 20px; }
.t5 { margin-left: 10px; }
.t6 { margin-left: 9px; }
.date { width: 88px; margin-left: 10px; text-align: right; }
.date span { letter-spacing: -.230px; }
.t7 { margin-left: 11px; }
```
